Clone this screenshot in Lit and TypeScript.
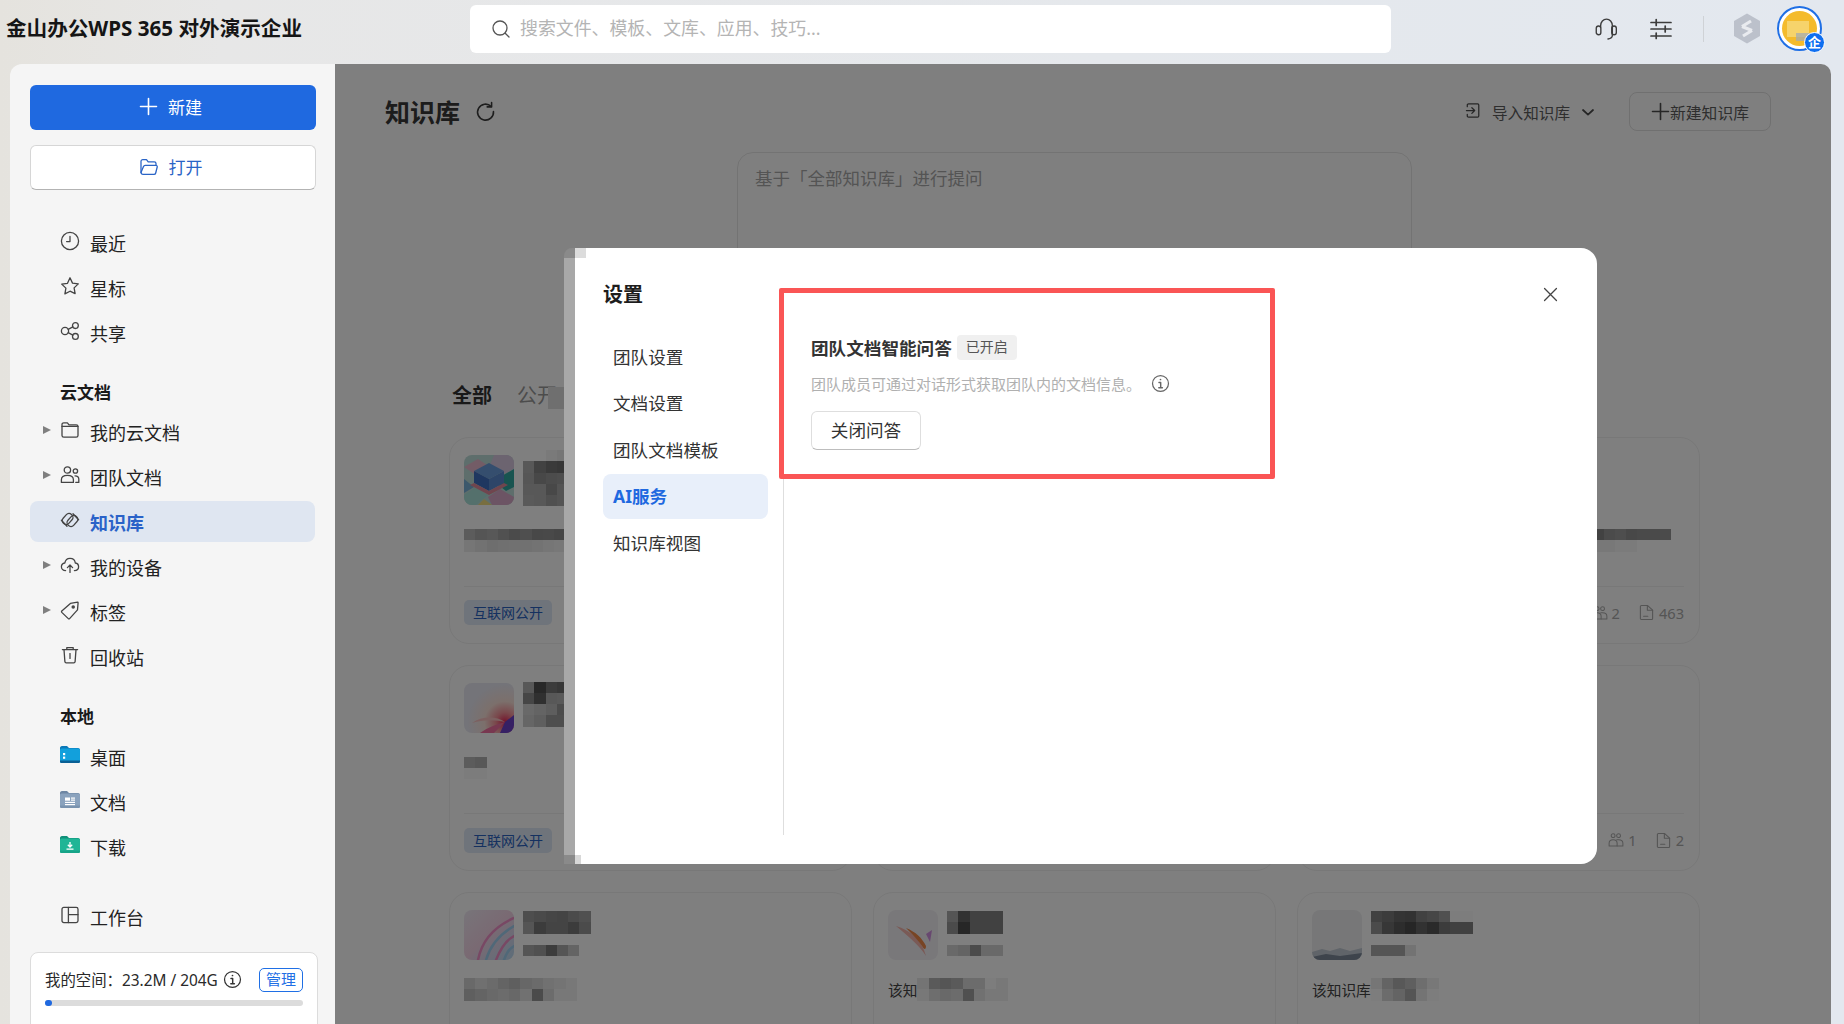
import { LitElement, css, html, svg } from 'lit'
import { customElement } from 'lit/decorators.js'

const svgIcon = (markup: string, size = 20, box = 20) => {
  const t = document.createElement('template')
  t.innerHTML = `<svg xmlns="http://www.w3.org/2000/svg" width="${size}" height="${size}" viewBox="0 0 ${box} ${box}" fill="none" stroke="currentColor" stroke-width="1.3" stroke-linecap="round" stroke-linejoin="round">${markup}</svg>`
  return t.content.firstElementChild
}

const icons: Record<string, string> = {
  clock: '<circle cx="10" cy="10" r="8.6"/><path d="M10 5.4V10.6H6.6"/>',
  star: '<path d="M10 1.8l2.5 5.3 5.8.8-4.2 4 1 5.8L10 15.2l-5.1 2.7 1-5.8-4.2-4 5.8-.8z"/>',
  share: '<circle cx="5" cy="10" r="3.6"/><circle cx="15.4" cy="4.6" r="2.9"/><circle cx="15.4" cy="15.4" r="2.9"/><path d="M8.2 8.4l4.6-2.5M8.2 11.6l4.6 2.5"/>',
  folder: '<path d="M2 4.6c0-1 .8-1.8 1.8-1.8h3.6l1.6 2H16.2c1 0 1.8.8 1.8 1.8v8.8c0 1-.8 1.8-1.8 1.8H3.8c-1 0-1.8-.8-1.8-1.8z"/><path d="M2 6.4h16"/>',
  team: '<circle cx="7.4" cy="5" r="3.2"/><circle cx="15.4" cy="6" r="2.2"/><path d="M1.4 17.4v-2.6c0-2.6 2.4-4.4 6-4.4s6 1.800 6 4.400v2.600z"/><path d="M15 10.800c2.200 0 3.800 1.300 3.800 3.300v3.300h-3"/>',
  kb: '<rect x="1.600" y="5.200" width="12" height="7.600" rx="3.600" transform="rotate(-48 7.600 9)"/><rect x="6.400" y="7.200" width="12" height="7.600" rx="3.600" transform="rotate(-48 12.400 11)"/><path d="M1.400 10.200l5.600 6M18.600 9.800l-5.600-6"/>',
  cloud: '<path d="M5.600 15.600c-2.400 0-4.200-1.600-4.200-3.800 0-2 1.400-3.500 3.400-3.800C5.400 5 7.500 3.400 10 3.400c2.900 0 5 1.900 5.300 4.600 2 .2 3.300 1.800 3.300 3.800 0 2.200-1.800 3.800-4.200 3.800"/><path d="M10 17.400v-7M7.400 12.600L10 10l2.600 2.600"/>',
  tag: '<path d="M1.800 11L10.400 3.400l7.200-1.200c.3 0 .5.200.5.500l-.6 7.200-7.900 8.700c-.4.400-.9.400-1.300 0L1.800 12.400c-.4-.4-.4-1 0-1.400z"/><circle cx="13.200" cy="7" r="1.100" fill="currentColor"/>',
  trash: '<path d="M2.400 4.600h15.200M6.800 4.600V2.600h6.400v2M4 4.600l.9 12c.1.800.6 1.200 1.300 1.200h7.600c.7 0 1.200-.4 1.300-1.200l.9-12"/><path d="M10 8.600v4.800"/>',
  board: '<rect x="2" y="2.400" width="16" height="15.200" rx="1.800"/><path d="M8.400 2.400v15.200M8.400 9.600H18"/>',
  open: '<path d="M2 15.600V4.400c0-1 .8-1.800 1.800-1.800h3.700l1.700 2.200h6c1 0 1.800.8 1.800 1.800v1.200"/><path d="M2 15.600c0 1 .8 1.800 1.800 1.800H15c.9 0 1.500-.6 1.700-1.400l1.500-6c.2-.9-.4-1.700-1.400-1.700H6.200c-.8 0-1.500.5-1.700 1.300z"/>',
  info: '<circle cx="10" cy="10" r="8.400"/><path d="M8.400 9h1.800v5.400M8.200 14.400h3.800" stroke-width="1.500"/><circle cx="10" cy="5.800" r=".9" fill="currentColor" stroke="none"/>',
  search: '<circle cx="9" cy="9" r="7"/><path d="M14.200 14.200L18 18"/>',
  headset: '<path d="M5.400 9.800V8.200C5.400 4.600 7.900 2 11 2s5.600 2.600 5.600 6.200v9.200c0 1.900-1.700 3.200-4.200 3.600"/><rect x="1.200" y="8.600" width="4.400" height="8.400" rx="2.200"/><rect x="16" y="8.600" width="4.400" height="8.400" rx="2.200"/>',
  sliders: '<path d="M1 4.500h20M1 11h20M1 18h20" stroke-width="1.700"/><path d="M6.200 1.500v6M15.200 8v6M6.200 15v5.500" stroke-width="1.700"/>',
  refresh: '<path d="M15.400 5.200A7.600 7.600 0 1 0 17.600 10" stroke-width="1.500"/><path d="M15.800 1.400v4.200h-4.200" stroke-width="1.500"/>',
  importKb: '<path d="M2.400 5V3.200c0-.7.600-1.200 1.300-1.200h9.600c.7 0 1.200.5 1.200 1.200v11.600c0 .7-.5 1.200-1.200 1.200H3.700c-.7 0-1.300-.5-1.300-1.200V13"/><path d="M1.500 9h8.500M7.200 6l3 3-3 3"/>',
  chevron: '<path d="M3 6l5 4.600L13 6" stroke-width="1.800"/>',
  plus: '<path d="M10 1.600v16.800M1.600 10h16.800" stroke-width="1.700"/>',
  close: '<path d="M3 3l14 14M17 3L3 17" stroke-width="1.500"/>',
  people: '<circle cx="6.400" cy="4.600" r="2.400"/><circle cx="13.200" cy="4.600" r="2.400"/><path d="M1.400 17.400v-3.200c0-2.800 2-4.600 5-4.600s5 1.800 5 4.600v3.200z"/><path d="M11 9.800c.6-.2 1.400-.2 2.200-.2 3.200 0 5.400 1.800 5.400 4.400v3.400h-7"/>',
  file: '<path d="M2.800 3c0-.7.500-1.200 1.200-1.200h7.400l5.800 5.400v9.800c0 .7-.5 1.200-1.200 1.200H4c-.7 0-1.200-.5-1.200-1.200z"/><path d="M11 1.800v5.600h6.200M6.600 14.400h5"/>',
}

const ic = (name: string, size = 20, box = 20) => svgIcon(icons[name], size, box)

const cube = svgIcon(`
  <rect width="50" height="50" fill="#bcdcd8" stroke="none"/>
  <path d="M0 12L14 4 26 12 12 20z" fill="#e6b8cc" stroke="none"/>
  <path d="M30 0h20v14L38 20 26 10z" fill="#d8c8e0" stroke="none"/>
  <path d="M36 22l14-8v18l-8 4-10-8z" fill="#30a8a0" stroke="none"/>
  <path d="M0 24l10 8-10 6z" fill="#78b0d8" stroke="none"/>
  <path d="M0 40l12-8 12 8-12 10H0z" fill="#a8e0d8" stroke="none"/>
  <path d="M24 42l12-8 14 8v8H28z" fill="#d8a8c8" stroke="none"/>
  <path d="M20 44l8 6H14z" fill="#f0dc80" stroke="none"/>
  <path d="M10 16l15-8 15 8-15 8z" fill="#6a9cdc" stroke="none"/>
  <path d="M10 16l15 8v12l-15-8z" fill="#3f6fc0" stroke="none"/>
  <path d="M25 24l15-8v12l-15 8z" fill="#5a8ad0" stroke="none"/>
  <path d="M10 28l15 8 15-8 4 2-19 10-19-10z" fill="#e08a9c" stroke="none"/>`, 50, 50)

const petals = svgIcon(`
  <defs><radialGradient id="pt" cx=".82" cy=".78" r=".75"><stop offset="0" stop-color="#e82858"/><stop offset=".25" stop-color="#f49098"/><stop offset=".55" stop-color="#f8e0d8"/><stop offset="1" stop-color="#e8e8f2"/></radialGradient></defs>
  <rect width="50" height="50" fill="url(#pt)" stroke="none"/>
  <path d="M41 39L50 32V50H36z" fill="#6c40c8" stroke="none"/>
  <path d="M41 39L30 50H16C24 44 34 41 41 39z" fill="#f070a0" stroke="none"/>
  <path d="M41 39C32 37 20 36 8 40 18 33 32 33 41 39z" fill="#f8c0c0" stroke="none"/>`, 50, 50)

const swirl = svgIcon(`
  <defs><linearGradient id="sw" x1="0" y1="0" x2="1" y2="1"><stop offset="0" stop-color="#f0eaf4"/><stop offset=".5" stop-color="#f4d4e6"/><stop offset="1" stop-color="#b8dcf4"/></linearGradient></defs>
  <rect width="50" height="50" fill="url(#sw)" stroke="none"/>
  <path d="M50 8C32 16 18 30 14 50M50 26C42 30 36 40 32 50" stroke="#f090c8" stroke-width="2.500"/>
  <path d="M50 16C36 24 26 36 22 50M50 36C46 38 42 44 40 50" stroke="#a0d0f0" stroke-width="2.500"/>`, 50, 50)

const streak = svgIcon(`
  <rect width="50" height="50" fill="#f3f0f5" stroke="none"/>
  <path d="M8 16C22 20 34 30 38 46 32 36 20 26 8 16z" fill="#f4b4ac" stroke="none"/>
  <path d="M18 18C28 22 34 28 38 36 38 40 36 40 34 36 30 30 24 24 18 18z" fill="#f08848" stroke="none"/>
  <path d="M38 24l6-4-2 12z" fill="#d090e0" stroke="none"/>`, 50, 50)

const peak = svgIcon(`
  <rect width="50" height="50" fill="#eeeff1" stroke="none"/>
  <path d="M0 42l10-3 8 2 10-3 10 3 12-3v12H0z" fill="#c0c8d2" stroke="none"/>
  <path d="M0 47l14-3 14 2 22-3v7H0z" fill="#7c8898" stroke="none"/>`, 50, 50)

type Grid = number[][]
interface Card {
  thumb: Element | null
  title: Grid
  sub?: Grid
  desc?: Grid
  descOffset?: number
  descText?: string
  descGap?: number
  tag?: string
  stats?: [string, string]
  titleShift?: number
}

const CELL = 11.3

// privacy pixelation from the source picture, values are gray levels before the scrim
const cards: Card[] = [
  {
    thumb: cube,
    titleShift: -5,
    title: [
      [254, 254, 244, 236, 244],
      [176, 132, 116, 110, 176],
      [172, 144, 152, 156, 176],
      [176, 176, 144, 168, 180],
      [180, 176, 160, 168, 180],
    ],
    desc: [
      [184, 170, 176, 162, 150, 158, 144, 146, 140, 160],
      [236, 228, 220, 224, 226, 226, 230, 236, 240, 240],
    ],
    tag: '互联网公开',
  },
  { thumb: null, title: [] },
  {
    thumb: null, title: [],
    desc: [
      [132, 132, 150, 156, 144, 148, 148, 150],
      [240, 240, 240, 246, 246, 254, 254, 254],
    ],
    descOffset: 269,
    stats: ['2', '463'],
  },
  {
    thumb: petals,
    titleShift: -1,
    title: [
      [176, 80, 120, 110, 160],
      [140, 96, 176, 180, 196],
      [210, 200, 188, 152, 200],
      [204, 190, 156, 156, 196],
    ],
    desc: [
      [184, 176],
      [248, 248],
    ],
    tag: '互联网公开',
  },
  { thumb: null, title: [] },
  { thumb: null, title: [], stats: ['1', '2'] },
  {
    thumb: swirl,
    title: [
      [156, 148, 140, 136, 150, 160],
      [170, 120, 136, 136, 120, 150],
    ],
    sub: [[170, 160, 120, 170, 200]],
    descGap: 18,
    desc: [
      [210, 224, 214, 200, 190, 206, 214, 226, 232, 240],
      [190, 200, 210, 216, 208, 226, 150, 216, 240, 240],
    ],
  },
  {
    thumb: streak,
    title: [
      [170, 100, 130, 130, 130],
      [150, 76, 130, 130, 130],
    ],
    sub: [[210, 200, 150, 210, 210]],
    descText: '该知',
    descGap: 18,
    desc: [
      [232, 180, 170, 180, 216, 216, 250, 240],
      [240, 220, 210, 216, 160, 226, 240, 240],
    ],
  },
  {
    thumb: peak,
    title: [
      [130, 120, 104, 100, 130, 140, 160, 250, 250],
      [150, 110, 90, 76, 100, 84, 120, 130, 130],
    ],
    sub: [[170, 170, 170, 230]],
    descText: '该知识库',
    descGap: 18,
    desc: [
      [236, 200, 176, 190, 220, 240],
      [250, 216, 200, 170, 232, 250],
    ],
  },
]

const nav = (icon: string, label: string, arrow = false, active = false) => html`
  <div class="row ${active ? 'active' : ''}">
    <span class="arrow">${arrow ? html`<i></i>` : ''}</span>
    <span class="row-icon">${ic(icon)}</span>
    <span>${label}</span>
  </div>`

const colorFolder = (top: string, body: string, band: string, glyph: unknown) => html`
  <svg width="20" height="17" viewBox="0 0 20 17">
    <path d="M0 2c0-1 .7-2 2-2h5l2 2h9c1 0 2 .8 2 2v3H0z" fill=${top}/>
    <rect y="2.500" width="20" height="14.500" rx="1.600" fill=${body}/>
    <path d="M0 14.500h20v1c0 .8-.7 1.500-1.600 1.500H1.600C.7 17 0 16.300 0 15.500z" fill=${band}/>
    ${glyph}
  </svg>`

@customElement('app-root')
export class AppRoot extends LitElement {
  mosaic(grid: Grid) {
    if (!grid.length) return ''
    return html`
      <div class="mosaic" style="grid-template-columns:repeat(${grid[0].length},${CELL}px)">
        ${grid.flat().map(v => html`<i style="background:rgb(${v},${v},${v})"></i>`)}
      </div>`
  }

  renderCard(c: Card) {
    return html`
      <div class="card">
        <div class="card-top">
          ${c.thumb
            ? html`<div class="thumb">${c.thumb.cloneNode(true)}</div>`
            : html`<div class="thumb blank"></div>`}
          <div class="card-head" style="margin-top:${c.titleShift ?? 1}px">
            ${this.mosaic(c.title)}
            ${c.sub ? html`<div class="sub">${this.mosaic(c.sub)}</div>` : ''}
          </div>
        </div>
        <div class="desc" style="padding-left:${c.descOffset ?? 0}px;margin-top:${c.descGap ?? 24}px">
          ${c.descText ? html`<span>${c.descText}</span>` : ''}
          ${c.desc ? this.mosaic(c.desc) : ''}
        </div>
        <div class="card-foot">
          ${c.tag ? html`<span class="tag">${c.tag}</span>` : ''}
          ${c.stats ? html`
            <span class="stats">
              ${ic('people', 16)}<span>${c.stats[0]}</span>
              <b></b>
              ${ic('file', 17)}<span>${c.stats[1]}</span>
            </span>` : ''}
        </div>
      </div>`
  }

  render() {
    return html`
      <header class="top">
        <div class="brand">金山办公WPS 365 对外演示企业</div>
        <div class="search">
          <span class="search-icon">${ic('search', 20)}</span>
          <span class="search-text">搜索文件、模板、文库、应用、技巧...</span>
        </div>
        <div class="tools">
          <span class="tool-a">${ic('headset', 23, 22)}</span>
          <span class="tool-b">${ic('sliders', 22, 22)}</span>
          <span class="sep"></span>
          <svg class="hex" width="28" height="31" viewBox="0 0 28 31">
            <path d="M14 0.500L27 8v15L14 30.500 1 23V8z" fill="#bcc1cb"/>
            <path d="M9 13.500L18 8M10 23L19 17.500M9 13.500l10 4" stroke="#e9ebef" stroke-width="3.200" fill="none"/>
          </svg>
          <div class="avatar">
            <div class="avatar-in"><i></i><u></u></div>
            <span class="badge">企</span>
          </div>
        </div>
      </header>
      <div class="body">
        <aside class="side">
          <button class="btn-new">${ic('plus', 19)}<span>新建</span></button>
          <button class="btn-open">${ic('open', 20)}<span>打开</span></button>
          <div class="group first">
            ${nav('clock', '最近')}
            ${nav('star', '星标')}
            ${nav('share', '共享')}
          </div>
          <div class="label cloud">云文档</div>
          ${nav('folder', '我的云文档', true)}
          ${nav('team', '团队文档', true)}
          ${nav('kb', '知识库', false, true)}
          ${nav('cloud', '我的设备', true)}
          ${nav('tag', '标签', true)}
          ${nav('trash', '回收站')}
          <div class="label local">本地</div>
          <div class="row">
            <span class="arrow"></span>
            <span class="row-icon">${colorFolder('#0a78b8', '#12a0dc', '#0a5f94', svg`<rect x="3" y="7" width="2.200" height="2.200" fill="#fff"/><rect x="3" y="10.600" width="2.200" height="2.200" fill="#fff"/>`)}</span>
            <span>桌面</span>
          </div>
          <div class="row">
            <span class="arrow"></span>
            <span class="row-icon">${colorFolder('#6d86a3', '#8aa2bd', '#7a93af', svg`<rect x="5" y="6.500" width="5" height="3.200" fill="#fff"/><rect x="11" y="6.500" width="4" height="1.200" fill="#fff"/><rect x="11" y="8.500" width="4" height="1.200" fill="#fff"/><rect x="5" y="10.800" width="10" height="1.200" fill="#fff"/><rect x="5" y="13" width="10" height="1.200" fill="#fff"/>`)}</span>
            <span>文档</span>
          </div>
          <div class="row">
            <span class="arrow"></span>
            <span class="row-icon">${colorFolder('#0f8f78', '#1fb596', '#17a488', svg`<path d="M10 6v5M7.800 8.800l2.200 2.200 2.200-2.200M6.500 13.200h7" stroke="#fff" stroke-width="1.300" fill="none"/>`)}</span>
            <span>下载</span>
          </div>
          <div class="workbench">${nav('board', '工作台')}</div>
          <div class="storage">
            <div class="storage-row">
              <span>我的空间：23.2M / 204G</span>
              <span class="storage-info">${ic('info', 19)}</span>
              <span class="manage">管理</span>
            </div>
            <div class="bar"><i style="width:7px"></i></div>
          </div>
        </aside>
        <main class="main">
          <div class="head">
            <span class="kb-title">知识库</span>
            <span class="refresh">${ic('refresh', 21)}</span>
            <span class="import">${ic('importKb', 19)}<span>导入知识库</span><span class="chev">${ic('chevron', 16, 16)}</span></span>
            <span class="create">${ic('plus', 19)}<span>新建知识库</span></span>
          </div>
          <div class="ask">基于「全部知识库」进行提问</div>
          <div class="tabs"><b>全部</b><span>公开</span></div>
          <div class="cards">${cards.map(c => this.renderCard(c))}</div>

          <div class="scrim">
            <div class="tabs-blur"></div>
            <div class="strip-top"></div>
            <div class="strip"></div>
            <div class="strip-foot"></div>
            <div class="modal">
              <div class="modal-side">
                <div class="modal-title">设置</div>
                <div class="menu">
                  <div>团队设置</div>
                  <div>文档设置</div>
                  <div>团队文档模板</div>
                  <div class="on">AI服务</div>
                  <div>知识库视图</div>
                </div>
              </div>
              <div class="modal-body">
                <div class="q-row">
                  <strong>团队文档智能问答</strong>
                  <span class="q-badge">已开启</span>
                </div>
                <div class="q-desc">
                  <span>团队成员可通过对话形式获取团队内的文档信息。</span>
                  <span class="q-info">${ic('info', 19)}</span>
                </div>
                <button class="q-btn">关闭问答</button>
              </div>
              <span class="modal-close">${ic('close', 17)}</span>
              <div class="redbox"></div>
              <div class="corner-top"></div>
              <div class="corner-foot"></div>
            </div>
          </div>
        </main>
      </div>
    `
  }

  static styles = css`
    :host {
      display: block;
      width: 1844px;
      height: 1024px;
      overflow: hidden;
      font-family: "Noto Sans", "Noto Sans CJK SC", sans-serif;
      background: linear-gradient(90deg, #e5e3de 0, #e7e7e7 12%, #e5e8ec 60%, #e3e8ef 100%);
      color: #1a1a1a;
    }
    button { font-family: inherit; cursor: pointer; }
    svg { display: block; }

    .top { display: flex; height: 64px; }
    .brand {
      width: 464px;
      padding-left: 6px;
      font-size: 20.6px;
      font-weight: 700;
      line-height: 57px;
      color: #151515;
      white-space: nowrap;
    }
    .search {
      display: flex;
      align-items: center;
      width: 921px;
      height: 48px;
      margin-top: 5px;
      border-radius: 6px;
      background: #fff;
      font-size: 17.9px;
      color: #b4b4b4;
    }
    .search-icon { margin: 0 9px 0 21px; color: #555; }
    .search-text { margin-bottom: 4px; }
    .tools { display: flex; align-items: center; height: 57px; color: #3c3c3c; }
    .tool-a { margin-left: 204px; }
    .tool-b { margin-left: 32px; }
    .sep { width: 1px; height: 26px; margin-left: 31px; background: #cfd2d6; }
    .hex { margin-left: 29px; }
    .avatar {
      position: relative;
      width: 45px;
      height: 45px;
      margin-left: 16px;
      box-sizing: border-box;
      border: 2px solid #1f6fe5;
      border-radius: 50%;
      background: #fff;
      padding: 3px;
    }
    .avatar-in { position: relative; width: 35px; height: 35px; border-radius: 50%; background: #f4bb2c; overflow: hidden; }
    .avatar-in i { position: absolute; left: 5px; top: 10px; width: 22px; height: 16px; background: #f6d36b; }
    .avatar-in u { position: absolute; left: 14px; top: 22px; width: 16px; height: 8px; background: #9fa9b6; opacity: .7; }
    .badge {
      position: absolute;
      right: -5px;
      bottom: -4px;
      width: 21px;
      height: 21px;
      box-sizing: border-box;
      border: 1px solid #fff;
      border-radius: 50%;
      background: #0f6ff0;
      color: #fff;
      font-size: 13px;
      font-weight: 700;
      line-height: 18px;
      text-align: center;
    }

    .body { display: flex; height: 960px; margin-left: 10px; }
    .side {
      width: 325px;
      height: 960px;
      box-sizing: border-box;
      padding: 21px 19px 0 20px;
      border-radius: 12px 0 0 0;
      background: #f5f5f5;
      overflow: hidden;
      font-size: 18px;
      color: #222;
    }
    .btn-new, .btn-open {
      display: flex;
      align-items: center;
      justify-content: center;
      gap: 10px;
      width: 286px;
      height: 45px;
      padding: 0 5px 2px 0;
      border-radius: 6px;
      font-size: 17px;
    }
    .btn-new { border: 0; background: #1f69e0; color: #fff; }
    .btn-open { margin-top: 15px; border: 1px solid #d6d6d6; border-bottom-color: #b3b3b3; background: #fff; color: #2a64c6; }
    .group.first { margin-top: 30px; }
    .row { display: flex; align-items: center; height: 45px; color: #222; }
    .row.active {
      height: 41px;
      margin: 2px 1px 2px 0;
      border-radius: 8px;
      background: #dfe6f1;
      color: #2a62c8;
      font-weight: 700;
    }
    .arrow { display: flex; align-items: center; width: 30px; padding-left: 13px; box-sizing: border-box; margin-top: -3px; }
    .arrow i { width: 0; height: 0; border-left: 8px solid #7f7f7f; border-top: 4.5px solid transparent; border-bottom: 4.5px solid transparent; }
    .row-icon { display: flex; width: 30px; margin-top: -4px; color: #444; }
    .label { padding-left: 30px; font-size: 17px; font-weight: 700; color: #1a1a1a; }
    .label.cloud { margin-top: 21px; line-height: 33px; }
    .label.local { margin-top: 21px; line-height: 34px; }
    .workbench { margin-top: 25px; }
    .storage {
      width: 288px;
      height: 90px;
      margin-top: 13px;
      box-sizing: border-box;
      padding: 14px 14px 0 14px;
      border: 1px solid #dcdcdc;
      border-radius: 8px;
      background: #fff;
      font-size: 15.4px;
      color: #2a2a2a;
    }
    .storage-row { display: flex; align-items: center; height: 24px; white-space: nowrap; }
    .storage-info { margin-left: 5px; color: #333; }
    .manage {
      width: 44px;
      height: 24px;
      margin: 2px 0 0 auto;
      box-sizing: border-box;
      border: 1px solid #1f6fe5;
      border-radius: 5px;
      color: #1f6fe5;
      font-size: 15px;
      line-height: 21px;
      text-align: center;
    }
    .bar { height: 6px; margin-top: 9px; border-radius: 3px; background: #dcdcdc; }
    .bar i { display: block; height: 6px; border-radius: 3px; background: #1f69e0; }

    .main {
      position: relative;
      width: 1496px;
      height: 960px;
      box-sizing: border-box;
      padding: 28px 60px 0 50px;
      border-radius: 0 10px 0 0;
      background: #fff;
      overflow: hidden;
    }
    .head { display: flex; align-items: center; height: 39px; color: #555; }
    .kb-title { margin-top: -2px; font-size: 25px; font-weight: 700; color: #383838; }
    .refresh { margin-left: 15px; color: #3c3c3c; }
    .import { display: flex; align-items: center; margin-left: auto; font-size: 15.6px; color: #5c5c5c; }
    .import svg { color: #4c4c4c; }
    .import > span:first-of-type { margin: 2px 0 0 8px; }
    .chev { margin: 0 0 0 10px; color: #333; }
    .create {
      display: flex;
      align-items: center;
      justify-content: center;
      width: 142px;
      height: 39px;
      margin-left: 33px;
      box-sizing: border-box;
      border: 1px solid #e0e0e0;
      border-radius: 8px;
      font-size: 15.8px;
      color: #5c5c5c;
    }
    .create span { margin-top: 2px; }
    .create svg { color: #4c4c4c; }
    .ask {
      width: 675px;
      height: 170px;
      margin: 21px 0 0 352px;
      box-sizing: border-box;
      padding: 12px 17px;
      border: 1px solid #e6e6e6;
      border-radius: 16px;
      font-size: 17.5px;
      color: #a8a8a8;
    }
    .tabs { display: flex; gap: 25px; height: 30px; margin: 57px 0 0 68px; align-items: center; font-size: 20px; }
    .tabs b { color: #333; margin-left: -1px; }
    .tabs span { color: #999; }
    .cards {
      display: grid;
      grid-template-columns: repeat(3, 403px);
      grid-auto-rows: 206.5px;
      gap: 21px;
      margin: 28px 0 0 64px;
      width: 1260px;
    }
    .card {
      position: relative;
      display: flex;
      flex-direction: column;
      box-sizing: border-box;
      padding: 17px 15px 0 14px;
      border: 1px solid #f0f0f0;
      border-radius: 20px;
      background: #fff;
    }
    .card-top { display: flex; gap: 9px; height: 50px; }
    .thumb { width: 50px; height: 50px; flex: none; border-radius: 8px; overflow: hidden; }
    .thumb.blank { background: #e8eef2; }
    .mosaic { display: grid; grid-auto-rows: 11.3px; }
    .mosaic i { display: block; }
    .card-head { flex: 1; }
    .sub { margin-top: 11px; }
    .desc {
      display: flex;
      align-items: center;
      height: 22.6px;
      font-size: 14.7px;
      color: #444;
      white-space: nowrap;
    }
    .card-foot {
      display: flex;
      align-items: center;
      height: 52px;
      margin-top: auto;
      margin-bottom: 4px;
      border-top: 1px solid #f0f0f0;
    }
    .tag {
      padding: 0 9px;
      height: 25px;
      border-radius: 5px;
      background: #dfe8f6;
      color: #2a62c0;
      font-size: 14px;
      line-height: 25px;
    }
    .stats { display: flex; align-items: center; gap: 4px; margin-left: auto; font-size: 14.6px; color: #aaa; }
    .stats b { width: 10px; }

    .scrim { position: absolute; inset: 0; background: rgba(0, 0, 0, .5); }
    .tabs-blur { position: absolute; left: 213px; top: 323px; width: 16px; height: 22px; background: #6f6f6f; }
    .strip-top { position: absolute; left: 229px; top: 184px; width: 11px; height: 10px; border-radius: 8px 0 0 0; background: #8a8a8a; }
    .strip { position: absolute; left: 229px; top: 194px; width: 11px; height: 597px; background: #a8a8a8; }
    .strip-foot { position: absolute; left: 229px; top: 791px; width: 11px; height: 9px; background: #8a8a8a; }
    .modal {
      position: absolute;
      left: 240px;
      top: 184px;
      display: flex;
      width: 1022px;
      height: 616px;
      border-radius: 0 16px 16px 0;
      background: #fff;
    }
    .modal-side {
      width: 209px;
      height: 587px;
      flex: none;
      box-sizing: border-box;
      padding: 33px 16px 0 28px;
      background: linear-gradient(#dedede, #dedede) right bottom / 1px calc(100% - 60px) no-repeat;
    }
    .modal-title { font-size: 20px; font-weight: 700; line-height: 28px; color: #1d1d1d; }
    .menu { margin-top: 26px; font-size: 17.6px; color: #333; }
    .menu div { height: 45px; margin-bottom: 1.4px; padding-left: 10px; border-radius: 8px; line-height: 45px; }
    .menu .on { background: #e8effa; color: #1f69e0; font-weight: 700; }
    .modal-body { padding: 87px 0 0 27px; }
    .q-row { display: flex; align-items: center; height: 25px; }
    .q-row strong { font-size: 17.6px; color: #333; }
    .q-badge {
      width: 60px;
      height: 25px;
      margin-left: 5px;
      border-radius: 4px;
      background: #f0f0f0;
      color: #555;
      font-size: 14px;
      line-height: 24px;
      text-align: center;
    }
    .q-desc { display: flex; align-items: center; height: 20px; margin-top: 13px; font-size: 15px; color: #b0b0b0; }
    .q-info { margin-left: 10px; color: #666; }
    .q-btn {
      display: block;
      width: 110px;
      height: 39px;
      margin-top: 18px;
      padding: 0 0 2px;
      border: 1px solid #dedede;
      border-bottom-color: #bdbdbd;
      border-radius: 6px;
      background: #fff;
      color: #333;
      font-size: 17.6px;
    }
    .modal-close { position: absolute; right: 38px; top: 38px; color: #444; }
    .redbox {
      position: absolute;
      left: 204px;
      top: 40px;
      width: 496px;
      height: 191px;
      box-sizing: border-box;
      border: 5px solid #fa5555;
      border-radius: 2px;
    }
    .corner-top { position: absolute; left: 0; top: 0; width: 11px; height: 10px; background: #dcdcdc; }
    .corner-foot { position: absolute; left: 0; bottom: 0; width: 6px; height: 9px; background: #d8d8d8; }
  `
}
